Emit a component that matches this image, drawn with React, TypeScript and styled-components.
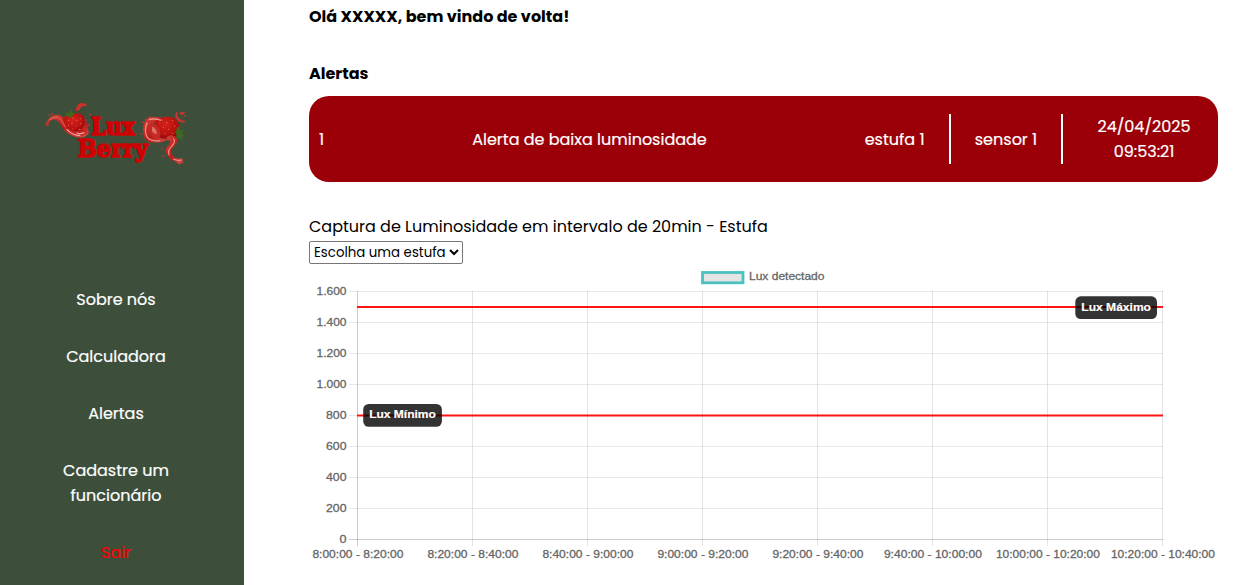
import React from "react";
import styled, { createGlobalStyle } from "styled-components";

const GlobalStyle = createGlobalStyle`
  * { box-sizing: border-box; }
  body {
    margin: 0;
    overflow: hidden;
    background: #fff;
    color: #000;
    font: 400 16px/25px Poppins, Inter, sans-serif;
  }
`;

const Page = styled.div`
  display: flex;
  height: 585px;
`;

const Sidebar = styled.aside`
  width: 244px;
  flex: none;
  background: #3d4f3b;
  padding: 90px 12px 0 0;
`;

const Logo = styled.svg`
  display: block;
  width: 170px;
  height: 90px;
  margin: 0 0 107px 29px;
`;

const Menu = styled.nav`
  display: flex;
  flex-direction: column;
  align-items: center;
  gap: 32px;
  text-align: center;
`;

const MenuItem = styled.a<{ $danger?: boolean }>`
  color: ${(p) => (p.$danger ? "#f00" : "#fff")};
  -webkit-text-stroke: 0.2px currentColor;
`;

const Text = styled.span`
  display: block;
  white-space: nowrap;
`;

const Main = styled.main`
  width: 909px;
  margin-left: 65px;
  padding-top: 4px;
`;

const Heading = styled.h1`
  margin: 0 0 32px;
  font-size: 16px;
  font-weight: 700;
`;

const SubHeading = styled(Heading)`
  margin-bottom: 10px;
`;

const AlertCard = styled.section`
  display: grid;
  grid-template-columns: 10px 521px 1fr 112px 149px;
  align-items: center;
  height: 86px;
  padding: 0 6px 0 10px;
  border-radius: 20px;
  background: #9b0008;
  color: #fff;
  -webkit-text-stroke: 0.2px currentColor;
`;

const Cell = styled.div<{ $align?: string; $divided?: boolean }>`
  display: flex;
  flex-direction: column;
  justify-content: center;
  height: 50px;
  align-items: ${(p) => p.$align ?? "center"};
  padding-right: ${(p) => (p.$align === "flex-end" ? 24.5 : 0)}px;
  border-right: ${(p) => (p.$divided ? "2px solid #fff" : "0")};
`;

const DateCell = styled(Cell)`
  padding-left: 13px;
`;

const ChartTitle = styled.div`
  margin-top: 32px;
`;

const Select = styled.select`
  display: block;
  width: 154px;
  height: 23px;
  margin-top: 2px;
  padding: 0;
  border: 1px solid #767676;
  border-radius: 2px;
  background: #fff;
  color: #000;
  font: 400 13.333px Poppins, Inter, sans-serif;
`;

const Chart = styled.svg`
  display: block;
  width: 909px;
  height: 300px;
  font-family: "Liberation Sans", sans-serif;
  font-size: 11.5px;
`;

const ChartLabel = styled.text`
  fill: #666;
  stroke: #666;
  stroke-width: 0.3px;
`;

const slots = ["8:00:00 - 8:20:00", "8:20:00 - 8:40:00", "8:40:00 - 9:00:00", "9:00:00 - 9:20:00", "9:20:00 - 9:40:00", "9:40:00 - 10:00:00", "10:00:00 - 10:20:00", "10:20:00 - 10:40:00"];
const slotWidths = [91, 91, 91, 91, 91, 98, 104, 104];
const levels = ["1.600", "1.400", "1.200", "1.000", "800", "600", "400", "200", "0"];

function Badge({ x, y, width, label, baseline }: { x: number; y: number; width: number; label: string; baseline: number }) {
  return (
    <g>
      <rect x={x} y={y} width={width} height={22.8} rx={5.5} fill="#000" fillOpacity={0.8} />
      <text x={x + 6} y={baseline} fill="#fff" stroke="#fff" strokeWidth="0.2" fontWeight="700" fontSize="11.2" textLength={width - 12} lengthAdjust="spacingAndGlyphs">{label}</text>
    </g>
  );
}

function LuxChart() {
  return (
    <Chart viewBox="309 264 909 300">
      <rect x="702.5" y="272.5" width="40.5" height="10.3" fill="#e4e4e4" stroke="#4bc0c0" strokeWidth="2.8" />
      <ChartLabel x="749" y="280" textLength="75.5" lengthAdjust="spacingAndGlyphs">Lux detectado</ChartLabel>
      {levels.map((l, i) => {
        const y = 291.5 + i * 31;
        const w = l.length === 5 ? 30 : l.length === 3 ? 20.5 : 7;
        return (
          <g key={l}>
            <line x1="349" x2="1163" y1={y} y2={y} stroke="#000" strokeOpacity={l === "0" ? 0.2 : 0.09} />
            <ChartLabel x={346.5 - w} y={y + 3.4} textLength={w} lengthAdjust="spacingAndGlyphs">{l}</ChartLabel>
          </g>
        );
      })}
      {slots.map((s, i) => {
        const x = 357.5 + i * 115;
        return (
          <g key={s}>
            <line x1={x} x2={x} y1="291" y2="546" stroke="#000" strokeOpacity={i === 0 ? 0.2 : 0.11} />
            <ChartLabel x={x + 0.4 - slotWidths[i] / 2} y="558" textLength={slotWidths[i]} lengthAdjust="spacingAndGlyphs">{s}</ChartLabel>
          </g>
        );
      })}
      <g stroke="#f00" strokeOpacity="0.92" strokeWidth="1.9">
        <line x1="357" x2="1163" y1="307" y2="307" />
        <line x1="357" x2="1163" y1="415.5" y2="415.5" />
      </g>
      <Badge x={1075.3} y={296.3} width={81.7} label="Lux Máximo" baseline={311} />
      <Badge x={363.2} y={404} width={78.7} label="Lux Mínimo" baseline={418} />
    </Chart>
  );
}

const leftSeeds = [[119, 91], [131, 84], [144, 91], [155, 101], [129, 101], [142, 108], [154, 86], [118, 106], [132, 117], [152, 118]];
const rightSeeds = [[392, 99], [400, 90], [414, 98], [430, 92], [437, 108], [403, 112], [419, 118], [431, 130], [408, 131]];
const drops = [[52, 99], [61, 75], [70, 72], [170, 91], [179, 105], [178, 128], [183, 73], [342, 97], [337, 132], [361, 82], [350, 88], [399, 176], [403, 199], [468, 77], [461, 218]];

function Dots({ points, r, fill }: { points: number[][]; r: number; fill: string }) {
  return (
    <g fill={fill}>
      {points.map(([x, y]) => (
        <circle key={`${x}-${y}`} cx={x} cy={y} r={r} />
      ))}
    </g>
  );
}

function BerryLogo() {
  return (
    <Logo viewBox="0 0 510 270" role="img" aria-label="Lux Berry">
      <defs>
        <radialGradient id="berry" cx="45%" cy="35%" r="70%">
          <stop offset="0" stopColor="#d5221c" />
          <stop offset="0.65" stopColor="#b8100e" />
          <stop offset="1" stopColor="#820808" />
        </radialGradient>
        <linearGradient id="juice" x1="0" y1="0" x2="1" y2="1">
          <stop offset="0" stopColor="#d9453e" />
          <stop offset="0.5" stopColor="#b81c18" />
          <stop offset="1" stopColor="#d9544c" />
        </linearGradient>
      </defs>

      <path d="M51 107 Q54 84 74 76 Q94 70 105 86 Q113 101 127 117 Q152 133 172 104 Q180 116 178 130 Q169 146 146 142 Q115 138 99 112 Q88 85 69 89 Q57 93 59 107Z" fill="url(#juice)" />
      <path d="M102 85 Q110 72 128 74 Q153 63 165 80 Q173 97 161 122 Q148 133 132 124 Q107 111 102 85Z" fill="url(#berry)" />
      <path d="M98 97 Q108 121 137 123 Q151 125 164 107 Q169 98 175 94 Q180 121 169 133 Q156 142 136 136 Q107 130 98 97Z" fill="#c4211d" fillOpacity="0.8" />
      <path d="M113 118 Q130 136 154 137 M143 128 Q151 134 166 128" fill="none" stroke="#efaaa0" strokeWidth="4" />
      <path d="M62 89 Q82 74 96 89 Q102 99 109 112" fill="none" stroke="#e46c62" strokeWidth="3" />
      <path d="M104 80 L113 74 L110 65 L120 70 L127 59 L131 69 L139 71 L130 77 L123 85 L117 78Z" fill="#42691e" />
      <path d="M140 62 Q143 39 158 39 Q170 39 176 49 Q160 44 154 55 Q151 66 140 62Z" fill="#ca312b" />

      <path d="M380 157 Q350 160 345 141 Q338 114 347 96 Q355 80 375 80 Q398 84 427 83 L430 108 Q394 91 376 99 Q362 110 368 133 Q377 146 414 139 L412 151 Q396 160 380 157Z" fill="url(#juice)" />
      <path d="M379 94 Q390 82 418 80 Q443 80 450 105 Q454 131 434 144 Q412 152 387 140 Q368 124 379 94Z" fill="url(#berry)" />
      <path d="M364 104 Q381 94 392 120 Q399 141 385 145 Q362 142 361 119Z" fill="#c52a25" />
      <path d="M369 110 Q381 112 384 132 Q374 133 369 123Z" fill="#dc756e" />
      <path d="M355 98 Q343 122 355 142 Q366 155 394 152 M359 89 Q376 84 397 91" fill="none" stroke="#ec8e86" strokeWidth="4" />
      <path d="M413 142 Q430 129 443 144 Q449 155 436 168 Q420 184 432 199 Q442 209 459 204 Q467 213 451 224 Q441 214 430 211 Q413 201 410 183 Q410 174 421 163 Q429 151 413 150Z" fill="url(#juice)" />
      <path d="M433 146 Q442 155 427 170 Q415 181 421 196 M433 207 Q446 213 457 210" fill="none" stroke="#ef938a" strokeWidth="3.5" />
      <path d="M444 115 L452 108 L453 121 L468 120 L457 129 L468 140 L458 139 L461 152 L449 143 L444 149 L443 135 L438 128Z" fill="#3f691e" />
      <path d="M443 66 Q442 91 469 95 Q452 99 443 86 Q437 76 443 66Z M452 70 L467 66 L460 74Z" fill="#cb352f" stroke="#cb352f" strokeWidth="3" />
      <Dots points={[...leftSeeds, ...rightSeeds]} r={1.8} fill="#e86a50" />
      <Dots points={drops} r={3} fill="#b9352d" />

      <text fill="#cc0204" stroke="#cc0204" strokeWidth="5" strokeLinejoin="round" fontFamily="'DejaVu Serif', serif" fontWeight="700" fontSize="70">
        <tspan x="186" y="136" textLength="132" lengthAdjust="spacingAndGlyphs">Lux</tspan>
        <tspan x="146" y="202" textLength="211" lengthAdjust="spacingAndGlyphs">Berry</tspan>
      </text>
    </Logo>
  );
}

export default function App() {
  return (
    <Page>
      <GlobalStyle />
      <Sidebar>
        <BerryLogo />
        <Menu>
          <MenuItem><Text>Sobre nós</Text></MenuItem>
          <MenuItem><Text>Calculadora</Text></MenuItem>
          <MenuItem><Text>Alertas</Text></MenuItem>
          <MenuItem><Text>Cadastre um</Text><Text>funcionário</Text></MenuItem>
          <MenuItem $danger><Text>Sair</Text></MenuItem>
        </Menu>
      </Sidebar>
      <Main>
        <Heading><Text>Olá XXXXX, bem vindo de volta!</Text></Heading>
        <SubHeading><Text>Alertas</Text></SubHeading>
        <AlertCard>
          <Cell $align="flex-start"><Text>1</Text></Cell>
          <Cell><Text>Alerta de baixa luminosidade</Text></Cell>
          <Cell $align="flex-end" $divided><Text>estufa 1</Text></Cell>
          <Cell $divided><Text>sensor 1</Text></Cell>
          <DateCell><Text>24/04/2025</Text><Text>09:53:21</Text></DateCell>
        </AlertCard>
        <ChartTitle><Text>Captura de Luminosidade em intervalo de 20min - Estufa</Text></ChartTitle>
        <Select defaultValue="x"><option value="x">Escolha uma estufa</option></Select>
        <LuxChart />
      </Main>
    </Page>
  );
}
